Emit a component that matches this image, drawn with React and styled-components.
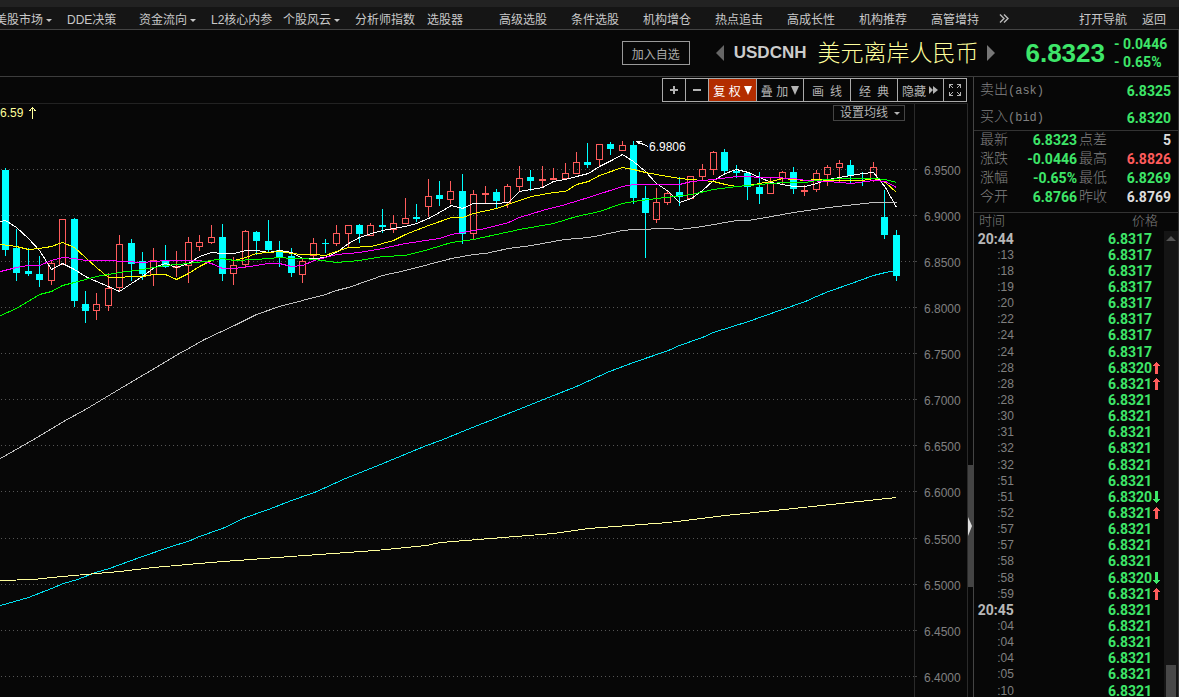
import React, { useState } from "react";
import styled, { createGlobalStyle } from "styled-components";

const GlobalStyle = createGlobalStyle`
  body {
    margin: 0;
    background-color: #070707;
    overflow: hidden;
  }
  * {
    box-sizing: border-box;
  }
  button {
    font-family: inherit;
    font-size: inherit;
    padding: 0;
    cursor: pointer;
  }
`;

const Container = styled.div`
  height: 100vh;
  display: flex;
  flex-direction: column;
  background-color: #070707;
  color: #c8c8c8;
  font-family: "Liberation Sans", "Noto Sans CJK SC", sans-serif;
  font-size: 12px;
`;

const TopStrip = styled.div`
  height: 7px;
  flex-shrink: 0;
  background-color: #222;
`;

const Nav = styled.nav`
  height: 23px;
  flex-shrink: 0;
  display: flex;
  align-items: center;
  padding: 4px 13px 0 0;
  background-color: #151515;
  border-bottom: 1px solid #444;
`;
const NavList = styled.div`
  flex: 1;
  display: flex;
  margin-left: -5px;
  overflow: hidden;
`;
const NavLink = styled.a`
  width: ${(props) => (props.$short ? "auto" : "72px")};
  margin-left: ${(props) => (props.$short ? "15px" : "0")};
  flex-shrink: 0;
  display: flex;
  align-items: center;
  gap: 3px;
  line-height: 18px;
  white-space: nowrap;
  color: #c8c8c8;
  text-decoration: none;
`;
const MoreLink = styled(NavLink)`
  width: auto;
  margin-left: -4px;
  padding-bottom: 3px;
`;
const Caret = styled.span`
  border: 3px solid transparent;
  border-top-color: currentColor;
  border-bottom: 0;
`;

const Header = styled.header`
  height: 47px;
  flex-shrink: 0;
  display: flex;
  align-items: center;
  justify-content: flex-end;
  padding-right: 11px;
  border-right: 1px solid #333;
  border-bottom: 1px solid #3c3c3c;
`;
const AddButton = styled.button`
  width: 68px;
  height: 24px;
  margin-right: 26px;
  color: #aaa;
  background-color: transparent;
  border: 1px solid #999;
`;
const Step = styled.button`
  display: flex;
  background-color: transparent;
  border: 0;
`;
const Code = styled.h1`
  margin: 0 11px 0 10px;
  color: #ccc;
  font-size: 17px;
  line-height: 24px;
`;
const Name = styled.span`
  margin-right: 9px;
  color: #ffff9c;
  font-size: 23px;
  font-weight: 300;
  line-height: 32px;
  white-space: nowrap;
`;
const LastPrice = styled.strong`
  margin: 0 9px 0 30px;
  color: #3ee669;
  font-size: 26px;
`;
const Change = styled.div`
  width: 53px;
  display: flex;
  flex-direction: column;
  color: #3ee669;
  font-family: Roboto, sans-serif;
  font-size: 14px;
  font-weight: 700;
  line-height: 18px;
  white-space: nowrap;
`;

const Main = styled.main`
  flex: 1;
  min-height: 0;
  display: flex;
`;
const ChartSide = styled.section`
  flex: 1;
  min-width: 0;
  display: flex;
  flex-direction: column;
`;
const Toolbar = styled.div`
  height: 27px;
  flex-shrink: 0;
  display: flex;
  justify-content: flex-end;
  padding: 1px 1px 1px 0;
  border-bottom: 1px solid #222;
`;
const ToolGroup = styled.div`
  display: flex;
  border-left: 1px solid #aaa;
`;
const Tool = styled.button`
  width: ${(props) => props.$width}px;
  height: 24px;
  display: flex;
  align-items: center;
  justify-content: center;
  gap: ${(props) => props.$gap || 3}px;
  color: ${(props) => (props.$active ? "#fff" : "#b4b4b4")};
  background-color: ${(props) => (props.$active ? "#b32d00" : "transparent")};
  border: 1px solid #aaa;
  border-left: 0;
`;
const ChartBox = styled.div`
  flex: 1;
  min-height: 0;
  position: relative;
  display: flex;
  justify-content: flex-end;
  overflow: hidden;
  border-right: 1px solid #2a2a2a;
`;
const ChartSvg = styled.svg`
  display: block;
  flex-shrink: 0;
`;
const AverageValue = styled.span`
  position: absolute;
  top: 1px;
  left: 0;
  display: flex;
  align-items: center;
  gap: 6px;
  color: #ffff9c;
  line-height: 16px;
`;
const AverageButton = styled.button`
  position: absolute;
  top: 1px;
  right: 62px;
  width: 72px;
  height: 16px;
  display: flex;
  align-items: center;
  justify-content: flex-end;
  gap: 6px;
  padding-right: 4px;
  color: #b4b4b4;
  line-height: 14px;
  background-color: #070707;
  border: 1px solid #444;
`;

const Splitter = styled.div`
  width: 5px;
  padding-top: 388px;
  flex-shrink: 0;
`;
const SplitHandle = styled.button`
  width: 5px;
  height: 122px;
  display: flex;
  align-items: center;
  background-color: #444;
  border: 0;
`;

const Panel = styled.aside`
  width: 206px;
  flex-shrink: 0;
  display: flex;
  flex-direction: column;
  border-left: 1px solid #444;
  border-right: 1px solid #333;
`;
const BidAsk = styled.dl`
  height: 54px;
  flex-shrink: 0;
  margin: 0;
  padding: 0 7px 0 6px;
  border-bottom: 1px solid #333;
`;
const BidAskRow = styled.div`
  height: 27px;
  display: flex;
  align-items: center;
  justify-content: space-between;
  line-height: 26px;
`;
const Stats = styled.dl`
  flex-shrink: 0;
  margin: 0;
  padding: 0 7px 5px 6px;
  display: grid;
  grid-template-columns: 31px 64px 31px 1fr;
  grid-auto-rows: 19px;
  column-gap: 2px;
  line-height: 19px;
  border-bottom: 1px solid #333;
`;
const Label = styled.dt`
  color: #808080;
  font-family: "Liberation Mono", "Noto Sans CJK SC", monospace;
  font-size: 14px;
  font-weight: 300;
  white-space: nowrap;
`;
const Unit = styled.span`
  font-size: 12px;
`;
const Value = styled.dd`
  margin: 0;
  color: ${(props) => props.$color || "#3ee669"};
  font-family: Roboto, sans-serif;
  font-size: 14px;
  font-weight: 700;
  text-align: right;
  white-space: nowrap;
`;
const TickArea = styled.div`
  flex: 1;
  min-height: 0;
  display: flex;
  align-items: stretch;
  overflow: hidden;
`;
const TickTable = styled.table`
  flex: 1;
  border-collapse: collapse;
  table-layout: fixed;
  align-self: flex-start;
`;
const TickHead = styled.th`
  height: 18px;
  padding: 0 ${(props) => (props.$right ? 6 : 5)}px;
  color: #808080;
  font-size: 13px;
  font-weight: 300;
  line-height: 16px;
  text-align: ${(props) => (props.$right ? "right" : "left")};
  vertical-align: top;
`;
const TickRow = styled.tr`
  height: 16px;
  line-height: 16px;
  vertical-align: top;

  &:nth-child(7n) {
    height: 17px;
  }
`;
const TickTime = styled.td`
  padding: 0 54px 0 0;
  color: ${(props) => (props.$minute ? "#b8b8b8" : "#808080")};
  font-family: ${(props) => (props.$minute ? "Roboto" : '"Liberation Sans"')}, sans-serif;
  font-size: ${(props) => (props.$minute ? 14 : 12)}px;
  font-weight: ${(props) => (props.$minute ? 700 : 400)};
  text-align: right;
`;
const TickPrice = styled.td`
  padding: 0;
  color: #3ee669;
  font-family: Roboto, sans-serif;
  font-size: 14px;
  font-weight: 700;
`;
const TickValue = styled.div`
  display: flex;
  align-items: center;
  gap: 1px;
  padding-left: 40px;
`;
const ScrollTrack = styled.div`
  width: 14px;
  margin-top: 18px;
  padding: 5px 2px 0;
  flex-shrink: 0;
  display: flex;
  flex-direction: column;
  align-items: center;
  justify-content: space-between;
  background-color: #151515;
`;
const ScrollThumb = styled.div`
  width: 10px;
  height: 32px;
  background-color: #484848;
`;

const navItems = [
  { text: "美股市场", menu: true },
  { text: "DDE决策" },
  { text: "资金流向", menu: true },
  { text: "L2核心内参" },
  { text: "个股风云", menu: true },
  { text: "分析师指数" },
  { text: "选股器" },
  { text: "高级选股" },
  { text: "条件选股" },
  { text: "机构增仓" },
  { text: "热点追击" },
  { text: "高成长性" },
  { text: "机构推荐" },
  { text: "高管增持" },
];

const stats = [
  ["最新", "6.8323"],
  ["点差", "5", "#ddd"],
  ["涨跌", "-0.0446"],
  ["最高", "6.8826", "#ff5c5c"],
  ["涨幅", "-0.65%"],
  ["最低", "6.8269"],
  ["今开", "6.8766"],
  ["昨收", "6.8769", "#ddd"],
];

const ticks = [
  ["20:44", "6.8317"],
  [":13", "6.8317"],
  [":18", "6.8317"],
  [":19", "6.8317"],
  [":20", "6.8317"],
  [":22", "6.8317"],
  [":24", "6.8317"],
  [":24", "6.8317"],
  [":28", "6.8320", "up"],
  [":28", "6.8321", "up"],
  [":28", "6.8321"],
  [":30", "6.8321"],
  [":31", "6.8321"],
  [":32", "6.8321"],
  [":32", "6.8321"],
  [":51", "6.8321"],
  [":51", "6.8320", "down"],
  [":52", "6.8321", "up"],
  [":57", "6.8321"],
  [":57", "6.8321"],
  [":58", "6.8321"],
  [":58", "6.8320", "down"],
  [":59", "6.8321", "up"],
  ["20:45", "6.8321"],
  [":04", "6.8321"],
  [":04", "6.8321"],
  [":04", "6.8321"],
  [":05", "6.8321"],
  [":10", "6.8321"],
];

const priceLevels = [
  ["6.9500", 169],
  ["6.9000", 215],
  ["6.8500", 261],
  ["6.8000", 307],
  ["6.7500", 353],
  ["6.7000", 399],
  ["6.6500", 445],
  ["6.6000", 491],
  ["6.5500", 538],
  ["6.5000", 584],
  ["6.4500", 630],
  ["6.4000", 676],
];

// wick top, body top, body bottom, wick bottom, rising
const candles = [
  [168, 170, 250, 256, 0], [229, 248, 273, 281, 0], [248, 271, 274, 276, 0],
  [256, 274, 280, 287, 0], [260, 263, 281, 285, 1], [219, 219, 265, 265, 1],
  [218, 219, 301, 307, 0], [291, 304, 311, 323, 0], [293, 304, 311, 320, 1],
  [273, 288, 306, 311, 1], [235, 244, 288, 292, 1], [239, 243, 264, 281, 0],
  [252, 261, 274, 280, 0], [248, 260, 275, 286, 1], [245, 261, 267, 268, 0],
  [251, 266, 268, 277, 1], [237, 242, 266, 283, 1], [235, 242, 247, 251, 1],
  [225, 237, 243, 244, 1], [224, 237, 274, 281, 0], [257, 265, 274, 285, 1],
  [230, 231, 265, 268, 1], [231, 232, 241, 255, 0], [220, 241, 250, 253, 0],
  [241, 250, 257, 267, 0], [248, 256, 273, 277, 0], [259, 261, 275, 283, 1],
  [238, 243, 256, 259, 1], [239, 243, 244, 253, 0], [225, 233, 244, 246, 1],
  [225, 225, 234, 247, 1], [224, 225, 234, 243, 0], [223, 225, 236, 236, 1],
  [209, 225, 227, 233, 0], [215, 223, 230, 233, 1], [198, 218, 224, 224, 1],
  [204, 217, 219, 222, 0], [179, 196, 207, 217, 1], [181, 195, 199, 206, 0],
  [181, 191, 200, 204, 1], [174, 191, 234, 244, 0], [190, 194, 234, 239, 1],
  [186, 193, 195, 203, 1], [189, 192, 201, 208, 0], [184, 186, 203, 208, 1],
  [166, 178, 187, 191, 1], [170, 177, 181, 191, 0], [166, 179, 181, 187, 1],
  [168, 178, 180, 180, 1], [163, 173, 179, 180, 1], [152, 162, 174, 174, 1],
  [143, 162, 165, 168, 0], [144, 144, 160, 166, 1], [142, 144, 149, 155, 0],
  [141, 145, 151, 151, 1], [141, 145, 198, 204, 0], [186, 198, 213, 258, 0],
  [188, 202, 220, 223, 1], [190, 193, 203, 205, 1], [177, 192, 197, 206, 0],
  [176, 176, 199, 199, 1], [164, 169, 177, 181, 1], [151, 152, 170, 175, 1],
  [149, 152, 171, 174, 0], [165, 171, 173, 178, 0], [172, 173, 187, 200, 0],
  [172, 187, 194, 204, 0], [178, 182, 194, 194, 1], [171, 172, 179, 185, 1],
  [167, 172, 189, 194, 0], [185, 190, 192, 196, 1], [170, 173, 190, 192, 1],
  [165, 167, 175, 186, 1], [160, 163, 168, 183, 1], [160, 165, 176, 184, 0],
  [172, 178, 179, 186, 0], [162, 167, 181, 182, 1], [190, 217, 235, 239, 0],
  [230, 235, 276, 281, 0],
];

const averages = [
  {
    color: "#fff",
    points:
      "0,221 5,220 16,227 28,238 39,250 51,269 62,263 74,269 85,276 96,281 108,286 119,291 131,283 142,276 154,267 165,263 176,267 188,263 199,256 211,252 222,253 234,253 245,250 256,250 268,252 279,250 291,252 302,258 314,258 325,257 336,252 348,243 359,237 371,233 382,230 393,228 405,226 416,223 428,218 439,212 451,205 462,208 473,203 496,203 508,202 519,191 531,189 542,187 553,181 565,179 576,176 588,173 599,166 611,160 622,154 633,161 645,171 656,183 668,191 679,202 691,198 702,190 713,180 725,173 736,169 748,172 759,177 771,182 782,184 793,186 805,186 816,183 828,179 839,177 851,175 862,173 873,172 885,187 896,207",
  },
  {
    color: "#ff0",
    points:
      "0,244 16,246 28,249 39,248 51,246 62,242 74,247 85,257 96,267 108,277 119,277 131,276 142,276 154,274 165,274 176,279 188,273 199,266 211,260 222,258 234,260 245,257 256,253 268,252 279,251 291,253 302,254 314,254 325,255 336,251 348,247 371,246 382,243 393,240 405,234 428,225 451,217 462,217 473,213 496,208 519,200 531,196 553,192 565,191 576,184 588,181 599,175 622,167 633,169 645,172 656,174 679,178 702,180 713,181 725,184 736,186 748,185 759,183 771,181 782,178 793,179 805,180 816,179 828,180 862,180 873,178 885,182 896,192",
  },
  {
    color: "#f0f",
    points:
      "0,271 16,267 28,265 39,265 51,260 62,257 74,258 85,260 108,260 142,262 165,260 199,260 211,263 222,268 234,268 256,265 268,263 279,263 291,266 302,265 314,260 336,254 359,252 382,248 405,243 439,238 451,234 462,232 485,228 508,222 519,217 542,210 565,204 588,197 622,186 633,184 679,184 691,181 713,179 736,176 771,177 793,178 805,180 828,181 851,183 873,180 885,181 896,187",
  },
  {
    color: "#0f0",
    points:
      "0,315 16,308 39,294 51,291 62,285 74,282 96,276 119,272 142,269 165,265 188,263 211,260 222,258 234,260 256,259 279,257 291,258 302,258 314,259 336,262 359,260 382,256 405,255 428,249 451,242 473,239 496,234 519,229 553,223 576,216 599,211 622,203 633,201 656,198 691,194 713,189 736,186 759,184 782,182 805,182 816,180 839,178 873,178 885,179 896,182",
  },
  {
    color: "#c0c0c0",
    points:
      "0,458 21,446 40,435 63,421 85,409 110,394 120,388 142,375 154,368 177,354 190,347 204,339 234,325 256,314 279,306 302,300 325,294 336,290 348,287 371,279 382,275 405,270 428,264 451,258 473,254 485,253 508,248 531,245 553,241 565,239 588,237 599,235 622,230 633,229 645,229 656,228 668,228 679,229 702,226 736,220 748,220 771,216 793,212 828,207 873,202 896,202",
  },
  {
    color: "#00e0f0",
    points:
      "0,605 28,597 51,588 63,583 77,579 95,572 109,568 120,564 142,556 165,548 190,540 199,536 222,528 245,517 268,509 291,500 314,492 345,478 380,464 426,445 440,440 472,427 495,418 518,409 543,399 576,386 609,371 633,362 668,350 679,345 702,337 713,332 748,321 782,309 805,301 816,296 828,291 851,283 873,275 885,272 896,270",
  },
  {
    color: "#ffff9c",
    points:
      "0,580 33,579 51,577 96,573 119,571 153,567 210,562 290,556 375,550 426,545 440,542 490,538 553,533 588,528 668,522 725,515 793,508 840,503 896,497",
  },
];

const Candle = ({ index, data }) => {
  const [high, top, bottom, low, rising] = data;
  const x = 5 + Math.round(index * 11.42);
  const color = rising ? "#ff5c5c" : "#0ff";
  return (
    <g fill={color}>
      <rect x={x} y={high} width="1" height={top - high} />
      <rect x={x} y={bottom} width="1" height={low - bottom} />
      {rising && bottom - top > 2 ? (
        <rect x={x - 2.5} y={top + 0.5} width="6" height={bottom - top - 1} fill="none" stroke={color} />
      ) : (
        <rect x={x - 3} y={top} width="7" height={bottom - top} />
      )}
    </g>
  );
};

const Chart = () => (
  <ChartSvg width="967" height="593" viewBox="0 104 967 593" shapeRendering="crispEdges">
    {priceLevels.map(([label, y]) => (
      <g key={label}>
        <line x1="1" x2="914" y1={y + 0.5} y2={y + 0.5} stroke="#555" strokeDasharray="1 3" />
        <rect x="914" y={y} width="3" height="1" fill="#444" />
        <text x="924" y={y + 6} fill="#808080" fontSize="12">
          {label}
        </text>
      </g>
    ))}
    <rect x="914" y="104" width="1" height="593" fill="#2a2a2a" />
    {candles.map((data, index) => (
      <Candle key={index} index={index} data={data} />
    ))}
    <g transform="translate(0.5 0.5)" fill="none">
      {averages.map((line) => (
        <polyline key={line.color} points={line.points} stroke={line.color} />
      ))}
      <path d="M636 141L648 146M636 141L641 141M636 141L639 144M637 142L641 143" stroke="#fff" />
    </g>
    <text x="649" y="151" fill="#fff" fontSize="12">
      6.9806
    </text>
  </ChartSvg>
);

const TickArrow = ({ dir }) => (
  <svg width="7" height="12" viewBox="0 0 7 12" shapeRendering="crispEdges">
    {dir === "up" ? (
      <path d="M3 0h1v1h1v1h1v1h1v1H5v8H2V4H0V3h1V2h1V1h1z" fill="#ff5c5c" />
    ) : (
      <path d="M3 12h1v-1h1v-1h1V9h1V8H5V0H2v8H0v1h1v1h1v1h1z" fill="#3ee669" />
    )}
  </svg>
);

const Triangle = ({ points, width, height, fill = "#b4b4b4" }) => (
  <svg width={width} height={height} viewBox={`0 0 ${width} ${height}`}>
    <polygon points={points} fill={fill} />
  </svg>
);

const App = () => {
  const [adjusted, setAdjusted] = useState(true);
  return (
    <Container>
      <GlobalStyle />
      <TopStrip />
      <Nav>
        <NavList>
          {navItems.map((item) => (
            <NavLink href="#" key={item.text}>
              {item.text}
              {item.menu && <Caret />}
            </NavLink>
          ))}
          <MoreLink href="#" aria-label="更多">
            <svg width="10" height="9" viewBox="0 0 10 9" fill="none" stroke="#bbb" strokeWidth="1.4">
              <path d="M1 0.5l4 4-4 4M5 0.5l4 4-4 4" />
            </svg>
          </MoreLink>
        </NavList>
        <NavLink href="#" $short>打开导航</NavLink>
        <NavLink href="#" $short>返回</NavLink>
      </Nav>
      <Header>
        <AddButton>加入自选</AddButton>
        <Step aria-label="上一个">
          <Triangle width={8} height={16} points="8,0 8,16 0,8" fill="#666" />
        </Step>
        <Code>USDCNH</Code>
        <Name>美元离岸人民币</Name>
        <Step aria-label="下一个">
          <Triangle width={8} height={16} points="0,0 0,16 8,8" fill="#777" />
        </Step>
        <LastPrice>6.8323</LastPrice>
        <Change>
          <span>- 0.0446</span>
          <span>- 0.65%</span>
        </Change>
      </Header>
      <Main>
        <ChartSide>
          <Toolbar>
            <ToolGroup>
              <Tool $width={23} aria-label="放大">
                <svg width="8" height="8" fill="#b4b4b4">
                  <path d="M3 0h2v3h3v2H5v3H3V5H0V3h3z" />
                </svg>
              </Tool>
              <Tool $width={23} aria-label="缩小">
                <svg width="8" height="2" fill="#b4b4b4">
                  <rect width="8" height="2" />
                </svg>
              </Tool>
              <Tool $width={48} $active={adjusted} onClick={() => setAdjusted(!adjusted)}>
                <span>复 权</span>
                <Triangle width={8} height={9} points="0,0 8,0 4,9" fill={adjusted ? "#fff" : "#b4b4b4"} />
              </Tool>
              <Tool $width={47}>
                <span>叠 加</span>
                <Triangle width={8} height={9} points="0,0 8,0 4,9" />
              </Tool>
              <Tool $width={47} $gap={6}>
                <span>画</span>
                <span>线</span>
              </Tool>
              <Tool $width={47} $gap={6}>
                <span>经</span>
                <span>典</span>
              </Tool>
              <Tool $width={46}>
                <span>隐藏</span>
                <Triangle width={10} height={8} points="0,0 4,4 4,0 9,4 4,8 4,4 0,8" />
              </Tool>
              <Tool $width={23} aria-label="全屏">
                <svg width="12" height="12" fill="none" stroke="#b4b4b4" shapeRendering="crispEdges">
                  <path d="M0.5 4V0.5H4M8 0.5h3.5V4M11.5 8v3.5H8M4 11.5H0.5V8M1 1l3 3M11 1L8 4M11 11L8 8M1 11l3-3" />
                </svg>
              </Tool>
            </ToolGroup>
          </Toolbar>
          <ChartBox>
            <Chart />
            <AverageValue>
              6.59
              <svg width="7" height="12" fill="none" stroke="#ffff9c" shapeRendering="crispEdges">
                <path d="M3.5 0v12M3.5 0.5L0.5 4M3.5 0.5L6.5 4" />
              </svg>
            </AverageValue>
            <AverageButton>
              设置均线
              <Caret />
            </AverageButton>
          </ChartBox>
        </ChartSide>
        <Splitter>
          <SplitHandle aria-label="收起">
            <Triangle width={4} height={19} points="0,0 4,9 0,19" fill="#ddd" />
          </SplitHandle>
        </Splitter>
        <Panel>
          <BidAsk>
            <BidAskRow>
              <Label>卖出<Unit>(ask)</Unit></Label>
              <Value>6.8325</Value>
            </BidAskRow>
            <BidAskRow>
              <Label>买入<Unit>(bid)</Unit></Label>
              <Value>6.8320</Value>
            </BidAskRow>
          </BidAsk>
          <Stats>
            {stats.map(([label, value, color]) => (
              <React.Fragment key={label}>
                <Label>{label}</Label>
                <Value $color={color}>{value}</Value>
              </React.Fragment>
            ))}
          </Stats>
          <TickArea>
            <TickTable>
              <thead>
                <tr>
                  <TickHead>时间</TickHead>
                  <TickHead $right>价格</TickHead>
                </tr>
              </thead>
              <tbody>
                {ticks.map(([time, price, dir], index) => (
                  <TickRow key={index}>
                    <TickTime $minute={time.length > 3}>{time}</TickTime>
                    <TickPrice>
                      <TickValue>
                        {price}
                        {dir && <TickArrow dir={dir} />}
                      </TickValue>
                    </TickPrice>
                  </TickRow>
                ))}
              </tbody>
            </TickTable>
            <ScrollTrack>
              <Triangle width={10} height={5} points="0,5 5,0 10,5" fill="#555" />
              <ScrollThumb />
            </ScrollTrack>
          </TickArea>
        </Panel>
      </Main>
    </Container>
  );
};

export default App;
